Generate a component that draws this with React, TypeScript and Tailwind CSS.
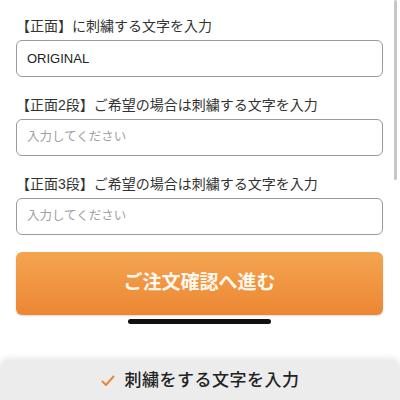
const font = { fontFamily: '"Liberation Sans", "Noto Sans CJK JP", sans-serif' };

const Field = ({ label, value, first }: { label: string; value?: string; first?: boolean }) => (
  <div className={first ? 'flex flex-col' : 'mt-[18px] flex flex-col'}>
    <div className="h-5 text-[14px] leading-5 text-[#333]">{label}</div>
    <div className="mt-1 flex h-[37px] items-center rounded-[6px] border border-[#9a9a9a] bg-white px-[10px]">
      {value ? (
        <span className="text-[13px] text-[#222]">{value}</span>
      ) : (
        <span className="text-[12.5px] text-[#a0a0a0]">入力してください</span>
      )}
    </div>
  </div>
);

export default function App() {
  return (
    <div className="relative flex h-[400px] w-[400px] flex-col overflow-hidden bg-white" style={font}>
      <div className="flex flex-col pl-4 pr-[17px] pt-4">
        <Field first label="【正面】に刺繍する文字を入力" value="ORIGINAL" />
        <Field label="【正面2段】ご希望の場合は刺繍する文字を入力" />
        <Field label="【正面3段】ご希望の場合は刺繍する文字を入力" />
        <button className="mt-[17px] flex h-[63px] items-center justify-center rounded-[6px] bg-gradient-to-b from-[#f4a550] to-[#ec8633] text-[19px] font-bold text-[#fff8ee] shadow-[0_1px_2px_rgba(0,0,0,0.15)]">
          ご注文確認へ進む
        </button>
        <div className="mx-auto mt-1 h-[5px] w-[143px] rounded-full bg-[#111]" />
      </div>
      <div className="mt-auto flex h-[39px] items-center justify-center gap-[10px] rounded-t-[8px] bg-[#ececec] shadow-[0_-2px_6px_rgba(0,0,0,0.12)]">
        <svg width="14" height="12" viewBox="0 0 14 12" fill="none">
          <path d="M1.5 6.5 L5 10 L12.5 1.5" stroke="#e8873a" strokeWidth="2" strokeLinecap="round" strokeLinejoin="round" />
        </svg>
        <span className="text-[17px] font-medium tracking-[0.5px] text-[#222]">刺繍をする文字を入力</span>
      </div>
      <div className="absolute right-[3px] top-0 h-[180px] w-[3px] rounded-full bg-[#c6c6c6]" />
    </div>
  );
}
